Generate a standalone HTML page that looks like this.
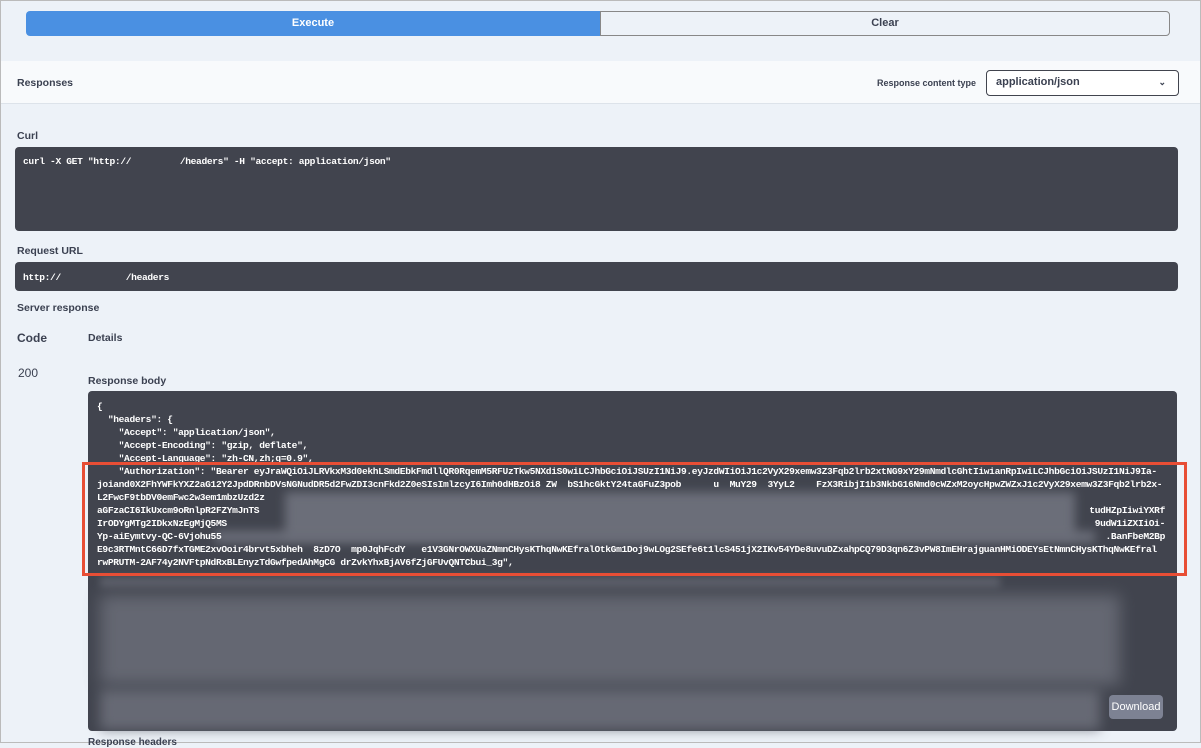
<!DOCTYPE html>
<html><head><meta charset="utf-8"><style>
*{box-sizing:border-box;margin:0;padding:0}
body{width:1201px;height:743px;overflow:hidden;background:#edf2f8;font-family:"Liberation Sans",sans-serif;position:relative;color:#3b4151}
.abs{position:absolute}
.lbl{position:absolute;font-size:10.5px;font-weight:bold;color:#3b4151}
.dark{position:absolute;background:#41444e;border-radius:4px}
.mono{font-family:"Liberation Mono",monospace;font-size:9.6px;letter-spacing:-0.35px;color:#fff;white-space:pre;font-weight:bold}
.ln{position:absolute;left:97px;line-height:13px}
.rt{position:absolute;left:97px;width:1068px;text-align:right;line-height:13px}
.blur{position:absolute;background:#70737e;filter:blur(4px);opacity:.9}
</style></head><body>
<div class="abs" style="left:0;top:0;width:1201px;height:743px;border:1px solid #bbb"></div>
<div class="abs" style="left:26px;top:11px;width:574px;height:25px;background:#4a90e2;border-radius:4px 0 0 4px;color:#fff;font-weight:bold;font-size:11px;text-align:center;line-height:25px">Execute</div>
<div class="abs" style="left:600px;top:11px;width:570px;height:25px;border:1px solid #888;border-radius:0 4px 4px 0;font-weight:bold;font-size:11px;text-align:center;line-height:23px">Clear</div>
<div class="abs" style="left:1px;top:61px;width:1199px;height:43px;background:#f8fafc;border-bottom:1px solid #dde3ea"></div>
<div class="lbl" style="left:17px;top:77px">Responses</div>
<div class="lbl" style="left:877px;top:78px;font-size:9px">Response content type</div>
<div class="abs" style="left:986px;top:70px;width:193px;height:26px;border:1.5px solid #41444e;border-radius:4px;background:#fff;font-weight:bold;font-size:11px;line-height:23px;padding-left:9px">application/json<span style="position:absolute;right:12px;top:0;font-size:9px">&#8964;</span></div>
<div class="lbl" style="left:17px;top:130px">Curl</div>
<div class="dark" style="left:15px;top:147px;width:1163px;height:84px"></div>
<div class="mono abs" style="left:23px;top:156px">curl -X GET "http://<span style="color:#888">         </span>/headers" -H "accept: application/json"</div>
<div class="lbl" style="left:17px;top:245px">Request URL</div>
<div class="dark" style="left:15px;top:262px;width:1163px;height:29px"></div>
<div class="mono abs" style="left:23px;top:272px">http://<span style="color:#777">            </span>/headers</div>
<div class="lbl" style="left:17px;top:302px">Server response</div>
<div class="lbl" style="left:17px;top:331px;font-size:12px">Code</div>
<div class="lbl" style="left:88px;top:332px">Details</div>
<div class="abs" style="left:18px;top:366px;font-size:12px">200</div>
<div class="lbl" style="left:88px;top:375px">Response body</div>
<div class="dark" style="left:88px;top:391px;width:1089px;height:340px"></div>
<div class="blur" style="left:285px;top:492px;width:790px;height:45px;filter:blur(5px)"></div>
<div class="blur" style="left:215px;top:531px;width:880px;height:12px;filter:blur(5px)"></div>
<div class="blur" style="left:100px;top:577px;width:900px;height:10px;opacity:.6"></div>
<div class="blur" style="left:100px;top:595px;width:1020px;height:90px;opacity:.75;filter:blur(8px)"></div>
<div class="blur" style="left:100px;top:690px;width:1000px;height:40px;opacity:.8;filter:blur(6px)"></div>
<div class="mono">
<div class="ln" style="top:400px">{</div>
<div class="ln" style="top:413px">  "headers": {</div>
<div class="ln" style="top:426px">    "Accept": "application/json",</div>
<div class="ln" style="top:439px">    "Accept-Encoding": "gzip, deflate",</div>
<div class="ln" style="top:452px">    "Accept-Language": "zh-CN,zh;q=0.9",</div>
<div class="ln" style="top:465px">    "Authorization": "Bearer eyJraWQiOiJLRVkxM3d0ekhLSmdEbkFmdllQR0RqemM5RFUzTkw5NXdiS0wiLCJhbGciOiJSUzI1NiJ9.eyJzdWIiOiJ1c2VyX29xemw3Z3Fqb2lrb2xtNG9xY29mNmdlcGhtIiwianRpIwiLCJhbGciOiJSUzI1NiJ9Ia-</div>
<div class="ln" style="top:478px">joiand0X2FhYWFkYXZ2aG12Y2JpdDRnbDVsNGNudDR5d2FwZDI3cnFkd2Z0eSIsImlzcyI6Imh0dHBzOi8 ZW  bS1hcGktY24taGFuZ3pob      u  MuY29  3YyL2    FzX3RibjI1b3NkbG16Nmd0cWZxM2oycHpwZWZxJ1c2VyX29xemw3Z3Fqb2lrb2x-</div>
<div class="ln" style="top:491px">L2FwcF9tbDV0emFwc2w3em1mbzUzd2z</div>
<div class="ln" style="top:504px">aGFzaCI6IkUxcm9oRnlpR2FZYmJnTS</div>
<div class="rt" style="top:504px">tudHZpIiwiYXRf</div>
<div class="ln" style="top:517px">IrODYgMTg2IDkxNzEgMjQ5MS</div>
<div class="rt" style="top:517px">9udW1iZXIiOi-</div>
<div class="ln" style="top:530px">Yp-aiEymtvy-QC-6Vjohu55</div>
<div class="rt" style="top:530px">.BanFbeM2Bp</div>
<div class="ln" style="top:543px">E9c3RTMntC66D7fxTGME2xvOoir4brvt5xbheh  8zD7O  mp0JqhFcdY   e1V3GNrOWXUaZNmnCHysKThqNwKEfralOtkGm1Doj9wLOg2SEfe6t1lcS451jX2IKv54YDe8uvuDZxahpCQ79D3qn6Z3vPW8ImEHrajguanHMiODEYsEtNmnCHysKThqNwKEfral</div>
<div class="ln" style="top:556px">rwPRUTM-2AF74y2NVFtpNdRxBLEnyzTdGwfpedAhMgCG drZvkYhxBjAV6fZjGFUvQNTCbui_3g",</div>
</div>
<div class="abs" style="left:82px;top:462px;width:1105px;height:114px;border:3px solid #e84e35"></div>
<div class="abs" style="left:1109px;top:695px;width:54px;height:24px;background:#7d8293;border-radius:4px;color:#fff;font-size:11px;text-align:center;line-height:24px">Download</div>
<div class="abs" style="left:88px;top:737px;font-size:10px;font-weight:bold">Response headers</div>
</body></html>
